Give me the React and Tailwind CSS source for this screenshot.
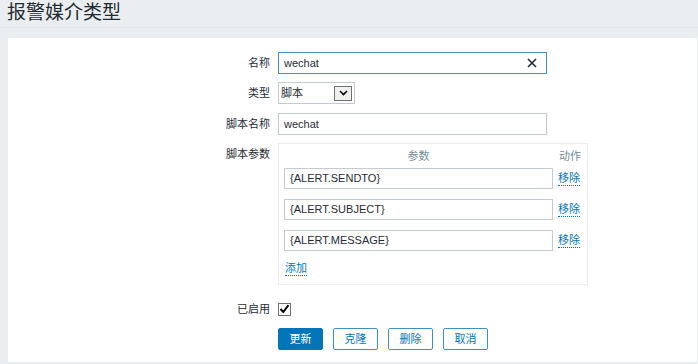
import React from "react";

const font = { fontFamily: '"Liberation Sans", Arial, "Noto Sans CJK SC", sans-serif' };

function Row({ label, children, className = "" }) {
  return (
    <div className={"flex " + className}>
      <div className="w-[262px] shrink-0 text-right text-[11px] leading-[22px] text-[#1f2c33]">{label}</div>
      <div className="ml-[8px] flex">{children}</div>
    </div>
  );
}

function ParamRow({ value }) {
  return (
    <div className="flex items-center">
      <div className="h-[21px] w-[269px] border border-[#c4cbcf] bg-white pl-[5px] text-[11px] leading-[19px] text-[#1f2c33]">{value}</div>
      <a className="ml-[5px] border-b border-dotted border-[#0275b8] text-[11px] leading-[13px] text-[#0275b8]">移除</a>
    </div>
  );
}

function Btn({ children, primary }) {
  return (
    <button
      className={
        "h-[22px] w-[45px] rounded-[2px] border text-[11px] leading-[20px] " +
        (primary ? "border-[#0275b8] bg-[#0275b8] text-white" : "border-[#3d8fc6] bg-white text-[#0275b8]")
      }
    >
      {children}
    </button>
  );
}

export default function App() {
  return (
    <div className="h-[364px] w-[698px] overflow-hidden bg-[#ebeef0]" style={font}>
      <div className="h-[28px] border-b border-[#dfe4e7] pl-[7px] text-[19px] leading-[26px] text-[#1f2c33]">报警媒介类型</div>
      <div className="ml-[8px] mr-[1px] mt-[10px] h-[324px] bg-white pt-[14px]">
        <Row label="名称">
          <div className="flex h-[22px] w-[269px] items-center justify-between border border-[#3d8fc6] bg-white pl-[5px] pr-[9px] text-[11px] text-[#1f2c33]">
            <span>wechat</span>
            <svg width="10" height="10" viewBox="0 0 10 10">
              <path d="M1 1 L9 9 M9 1 L1 9" stroke="#1f2c33" strokeWidth="1.6" />
            </svg>
          </div>
        </Row>
        <Row label="类型" className="mt-[8px]">
          <div className="flex h-[22px] w-[77px] items-center justify-between border border-[#c4cbcf] bg-white pl-[2px] pr-[2px] text-[11px] text-[#1f2c33]">
            <span>脚本</span>
            <div className="flex h-[15px] w-[18px] items-center justify-center border border-[#707070] bg-[#f0f0f0]">
              <svg width="9" height="6" viewBox="0 0 9 6">
                <path d="M1 1 L4.5 4.5 L8 1" stroke="#000" strokeWidth="1.6" fill="none" />
              </svg>
            </div>
          </div>
        </Row>
        <Row label="脚本名称" className="mt-[9px]">
          <div className="h-[22px] w-[269px] border border-[#c4cbcf] bg-white pl-[5px] text-[11px] leading-[20px] text-[#1f2c33]">wechat</div>
        </Row>
        <Row label="脚本参数" className="mt-[8px]">
          <div className="h-[142px] w-[310px] border border-[#ebeef0] pl-[5px] pt-[5px]">
            <div className="flex text-[11px] leading-[15px] text-[#768d99]">
              <div className="w-[269px] text-center">参数</div>
              <div className="ml-[6px]">动作</div>
            </div>
            <div className="mt-[4px] flex flex-col gap-[10px]">
              <ParamRow value="{ALERT.SENDTO}" />
              <ParamRow value="{ALERT.SUBJECT}" />
              <ParamRow value="{ALERT.MESSAGE}" />
            </div>
            <a className="ml-[1px] mt-[11px] inline-block border-b border-dotted border-[#0275b8] text-[11px] leading-[13px] text-[#0275b8]">添加</a>
          </div>
        </Row>
        <Row label="已启用" className="mt-[13px]">
          <div className="flex h-[22px] items-center">
            <div className="flex h-[13px] w-[13px] items-center justify-center border border-[#707070] bg-white">
              <svg width="11" height="10" viewBox="0 0 11 10">
                <path d="M1.5 5 L4.2 8 L9.5 1.2" stroke="#000" strokeWidth="2" fill="none" />
              </svg>
            </div>
          </div>
        </Row>
        <Row label="" className="mt-[8px]">
          <div className="flex gap-[10px]">
            <Btn primary>更新</Btn>
            <Btn>克隆</Btn>
            <Btn>删除</Btn>
            <Btn>取消</Btn>
          </div>
        </Row>
      </div>
    </div>
  );
}
